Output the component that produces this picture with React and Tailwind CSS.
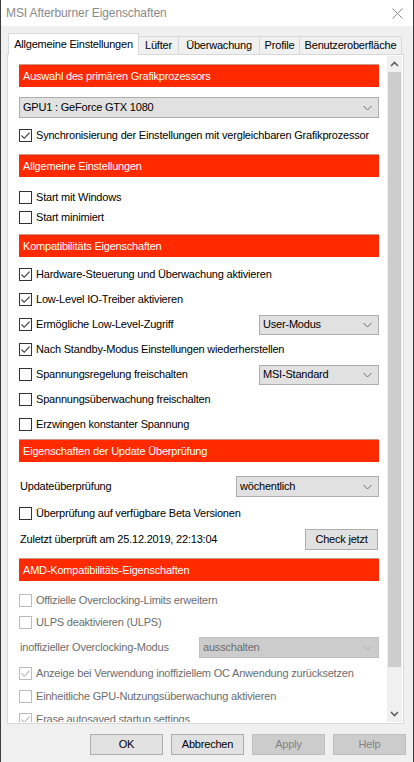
import React from "react";

const FONT = "font-['Liberation_Sans',Arial,sans-serif]";

function Check({ checked, disabled }) {
  return (
    <span
      className={`w-[13px] h-[13px] border bg-white flex items-center justify-center shrink-0 ${
        disabled ? "border-[#bcbcbc]" : "border-[#333333]"
      }`}
    >
      {checked && (
        <svg width="11" height="11" viewBox="0 0 11 11">
          <path
            d="M1.5 5.5 L4.2 8.3 L9.6 2.6"
            stroke={disabled ? "#bcbcbc" : "#333333"}
            strokeWidth="1.1"
            fill="none"
          />
        </svg>
      )}
    </span>
  );
}

function Chevron({ color = "#666666" }) {
  return (
    <svg width="9" height="6" viewBox="0 0 9 6">
      <path d="M0.5 1 L4.5 5 L8.5 1" stroke={color} strokeWidth="1" fill="none" />
    </svg>
  );
}

function Row({ checked, disabled, children, h = "h-[20px]", mt = "", right = null }) {
  return (
    <div className={`${h} ${mt} flex items-center justify-between`}>
      <div className="flex items-center gap-[4px]">
        <Check checked={checked} disabled={disabled} />
        <span className={disabled ? "text-[#6d6d6d]" : "text-black"}>{children}</span>
      </div>
      {right}
    </div>
  );
}

function Header({ children, mt }) {
  return (
    <div className={`h-[23px] ${mt} bg-[#ff2a00] border-t border-[#c7968c] text-white pl-[4px] flex items-center`}>
      {children}
    </div>
  );
}

function Select({ text, w, h = "h-[21px]", disabled }) {
  return (
    <div
      className={`${w} ${h} border flex items-center justify-between pl-[3px] pr-[6px] ${
        disabled ? "border-[#bfbfbf] bg-[#cccccc] text-[#6d6d6d]" : "border-[#adadad] bg-[#e1e1e1] text-black"
      }`}
    >
      <span>{text}</span>
      <Chevron color={disabled ? "#b0b0b0" : "#6a6a6a"} />
    </div>
  );
}

function Btn({ children, disabled, w = "w-[73px]" }) {
  return (
    <div
      className={`${w} h-[21px] border flex items-center justify-center ${
        disabled ? "border-[#bfbfbf] bg-[#cccccc] text-[#838383]" : "border-[#adadad] bg-[#e1e1e1] text-black"
      }`}
    >
      {children}
    </div>
  );
}

export default function App() {
  return (
    <div
      className={`w-[414px] h-[762px] bg-[#f0f0f0] border-l border-r border-[#3c3c3c] flex flex-col overflow-hidden text-[11px] tracking-[-0.2px] leading-none whitespace-nowrap ${FONT}`}
    >
      {/* Title bar */}
      <div className="h-[26px] bg-white flex items-center justify-between pl-[5px] pr-[10px] shrink-0">
        <span className="text-[#8a8a8a] text-[12px] tracking-[-0.1px]">MSI Afterburner Eigenschaften</span>
        <svg width="11" height="11" viewBox="0 0 11 11">
          <path d="M0.5 0.5 L10.5 10.5 M10.5 0.5 L0.5 10.5" stroke="#8a8a8a" strokeWidth="1" />
        </svg>
      </div>

      {/* Tabs */}
      <div className="mt-[7px] ml-[7px] flex items-end h-[21px] relative z-10">
        <div className="w-[131px] h-[22px] -mb-[1px] bg-white border-l border-t border-r border-[#d9d9d9] flex items-center justify-center">
          Allgemeine Einstellungen
        </div>
        <div className="w-[40px] h-[18px] bg-[#f0f0f0] border-t border-r border-[#d9d9d9] flex items-center justify-center">
          Lüfter
        </div>
        <div className="w-[81px] h-[18px] bg-[#f0f0f0] border-t border-r border-[#d9d9d9] flex items-center justify-center">
          Überwachung
        </div>
        <div className="w-[40px] h-[18px] bg-[#f0f0f0] border-t border-r border-[#d9d9d9] flex items-center justify-center">
          Profile
        </div>
        <div className="w-[102px] h-[18px] bg-[#f0f0f0] border-t border-r border-[#d9d9d9] flex items-center justify-center">
          Benutzeroberfläche
        </div>
      </div>

      {/* Panel */}
      <div className="ml-[6px] w-[397px] h-[670px] border border-[#d9d9d9] bg-white p-[1px] flex shrink-0">
        <div className="flex-1 overflow-hidden">
          <div className="pt-[8px] pl-[10px] w-[370px]">
            <Header mt="">Auswahl des primären Grafikprozessors</Header>
            <div className="mt-[10px]">
              <Select text="GPU1 : GeForce GTX 1080" w="w-[360px]" />
            </div>
            <Row checked mt="mt-[7px]">
              Synchronisierung der Einstellungen mit vergleichbaren Grafikprozessor
            </Row>

            <Header mt="mt-[9px]">Allgemeine Einstellungen</Header>
            <Row mt="mt-[10px]">Start mit Windows</Row>
            <Row>Start minimiert</Row>

            <Header mt="mt-[7px]">Kompatibilitäts Eigenschaften</Header>
            <Row checked h="h-[25px]" mt="mt-[5px]">
              Hardware-Steuerung und Überwachung aktivieren
            </Row>
            <Row checked h="h-[25px]">
              Low-Level IO-Treiber aktivieren
            </Row>
            <Row checked h="h-[25px]" right={<Select text="User-Modus" w="w-[120px]" h="h-[20px]" />}>
              Ermögliche Low-Level-Zugriff
            </Row>
            <Row checked h="h-[25px]">
              Nach Standby-Modus Einstellungen wiederherstellen
            </Row>
            <Row h="h-[25px]" right={<Select text="MSI-Standard" w="w-[120px]" h="h-[20px]" />}>
              Spannungsregelung freischalten
            </Row>
            <Row h="h-[25px]">Spannungsüberwachung freischalten</Row>
            <Row h="h-[24px]">Erzwingen konstanter Spannung</Row>

            <Header mt="mt-[3px]">Eigenschaften der Update Überprüfung</Header>
            <div className="mt-[14px] h-[21px] flex items-center justify-between">
              <span className="pl-[1px]">Updateüberprüfung</span>
              <Select text="wöchentlich" w="w-[143px]" />
            </div>
            <Row mt="mt-[6px]">Überprüfung auf verfügbare Beta Versionen</Row>
            <div className="mt-[6px] h-[21px] flex items-center justify-between">
              <span className="pl-[1px]">Zuletzt überprüft am 25.12.2019, 22:13:04</span>
              <div className="mr-[1px]">
                <Btn>Check jetzt</Btn>
              </div>
            </div>

            <Header mt="mt-[8px]">AMD-Kompatibilitäts-Eigenschaften</Header>
            <Row disabled mt="mt-[9px]">
              Offizielle Overclocking-Limits erweitern
            </Row>
            <Row disabled mt="mt-[2px]">
              ULPS deaktivieren (ULPS)
            </Row>
            <div className="mt-[5px] h-[21px] flex items-center justify-between">
              <span className="pl-[1px] text-[#6d6d6d]">inoffizieller Overclocking-Modus</span>
              <Select text="ausschalten" w="w-[180px]" disabled />
            </div>
            <Row checked disabled mt="mt-[5px]">
              Anzeige bei Verwendung inoffiziellem OC Anwendung zurücksetzen
            </Row>
            <Row disabled mt="mt-[3px]">
              Einheitliche GPU-Nutzungsüberwachung aktivieren
            </Row>
            <Row checked disabled mt="mt-[3px]">
              Erase autosaved startup settings
            </Row>
          </div>
        </div>
        {/* Scrollbar */}
        <div className="w-[15px] bg-[#f0f0f0] flex flex-col">
          <div className="h-[16px] flex items-center justify-center">
            <svg width="9" height="6" viewBox="0 0 9 6">
              <path d="M1 5 L4.5 1.5 L8 5" stroke="#606060" strokeWidth="1.6" fill="none" />
            </svg>
          </div>
          <div className="h-[595px] mx-[1px] bg-[#cdcdcd]" />
          <div className="flex-1" />
          <div className="h-[16px] flex items-center justify-center">
            <svg width="9" height="6" viewBox="0 0 9 6">
              <path d="M1 1 L4.5 4.5 L8 1" stroke="#606060" strokeWidth="1.6" fill="none" />
            </svg>
          </div>
        </div>
      </div>

      {/* Bottom buttons */}
      <div className="mt-[10px] flex justify-end gap-[8px] pr-[7px]">
        <Btn>OK</Btn>
        <Btn>Abbrechen</Btn>
        <Btn disabled>Apply</Btn>
        <Btn disabled>Help</Btn>
      </div>
    </div>
  );
}
